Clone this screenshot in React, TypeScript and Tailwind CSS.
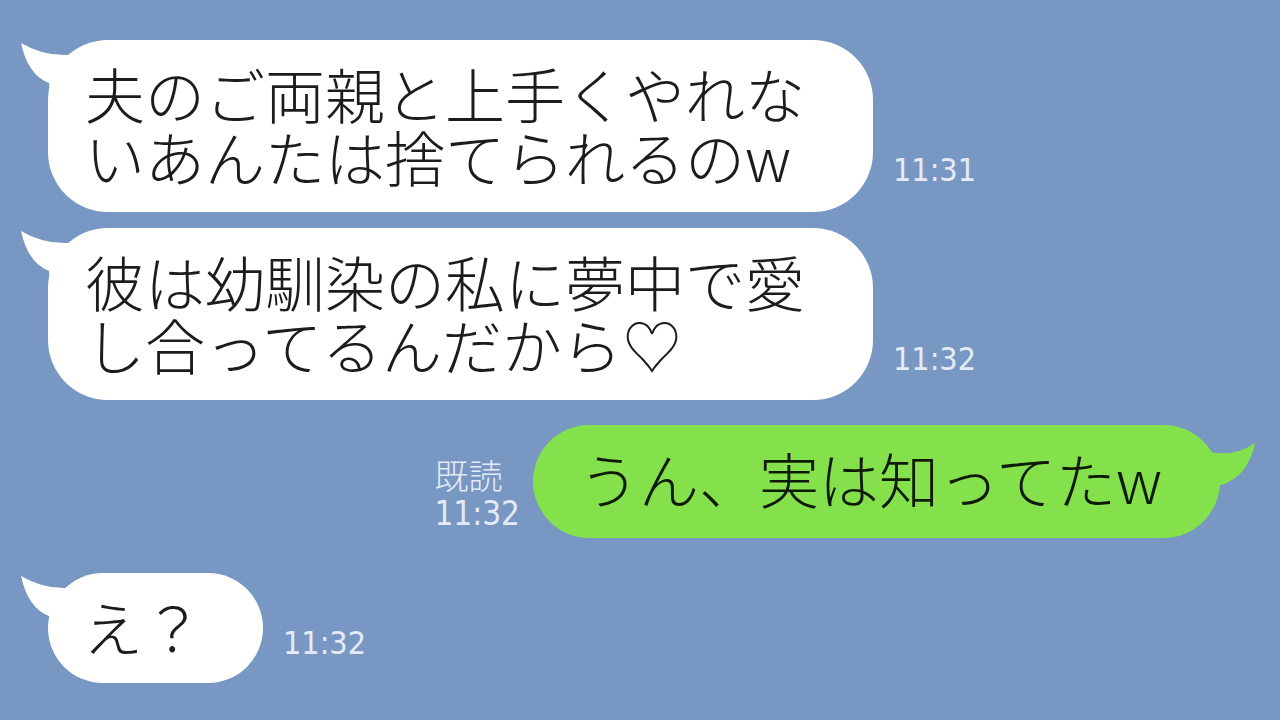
import React from "react";

const jp = { fontFamily: '"Noto Sans CJK JP", "Noto Sans", sans-serif' } as const;
const num = { fontFamily: '"DejaVu Sans Condensed", "DejaVu Sans", sans-serif', fontStretch: "condensed" } as const;

function WhiteTail() {
  return (
    <svg
      className="absolute left-[-30px] top-0"
      width="80"
      height="70"
      viewBox="0 0 80 70"
    >
      <path d="M3 3 Q25 16 50 15 L78 15 L78 68 L34 68 L31 43 Q10 35 3 3 Z" fill="#ffffff" />
    </svg>
  );
}

function GreenTail() {
  return (
    <svg
      className="absolute right-[-40px] top-0"
      width="70"
      height="75"
      viewBox="0 0 70 75"
    >
      <path d="M8 27 L20 27 Q45 32 65 18 Q58 52 31 60 L8 60 Z" fill="#84e14c" />
    </svg>
  );
}

function Time({ t, mb }: { t: string; mb: string }) {
  return (
    <div
      className={`ml-[20px] text-[32px] leading-[32px] text-[#e4ebf6] ${mb}`}
      style={num}
    >
      {t}
    </div>
  );
}

export default function App() {
  return (
    <div className="w-[1280px] h-[720px] overflow-hidden bg-[#7897c3] flex flex-col pt-[40px]">
      {/* Row 1 */}
      <div className="flex items-end pl-[48px]">
        <div
          className="relative w-[825px] h-[172px] rounded-[60px] bg-white pl-[37px] pt-[21px] text-[60px] leading-[63px] text-[#1c1c1c] font-light"
          style={jp}
        >
          <WhiteTail />
          <div className="relative">夫のご両親と上手くやれな</div>
          <div className="relative">いあんたは捨てられるのw</div>
        </div>
        <Time t="11:31" mb="mb-[26px]" />
      </div>

      {/* Row 2 */}
      <div className="flex items-end pl-[48px] mt-[16px]">
        <div
          className="relative w-[825px] h-[172px] rounded-[60px] bg-white pl-[37px] pt-[21px] text-[60px] leading-[63px] text-[#1c1c1c] font-light"
          style={jp}
        >
          <WhiteTail />
          <div className="relative">彼は幼馴染の私に夢中で愛</div>
          <div className="relative">し合ってるんだから♡</div>
        </div>
        <Time t="11:32" mb="mb-[25px]" />
      </div>

      {/* Row 3 (green) */}
      <div className="flex items-end justify-end pr-[60px] mt-[25px]">
        <div className="mr-[13px] mb-[7px] flex flex-col items-start text-[#e4ebf6]">
          <div className="text-[34px] leading-[40px] font-light" style={jp}>
            既読
          </div>
          <div className="text-[33px] leading-[34px] mt-[2px]" style={num}>
            11:32
          </div>
        </div>
        <div
          className="relative w-[687px] h-[113px] rounded-[57px] bg-[#84e14c] pl-[46px] pt-[21px] text-[60px] leading-[63px] text-[#0f1a08] font-light"
          style={jp}
        >
          <GreenTail />
          <div className="relative">うん、実は知ってたw</div>
        </div>
      </div>

      {/* Row 4 */}
      <div className="flex items-end pl-[48px] mt-[35px]">
        <div
          className="relative w-[215px] h-[110px] rounded-[55px] bg-white pl-[35px] pt-[21px] text-[60px] leading-[63px] text-[#1c1c1c] font-light"
          style={jp}
        >
          <WhiteTail />
          <div className="relative">え？</div>
        </div>
        <Time t="11:32" mb="mb-[24px]" />
      </div>
    </div>
  );
}
